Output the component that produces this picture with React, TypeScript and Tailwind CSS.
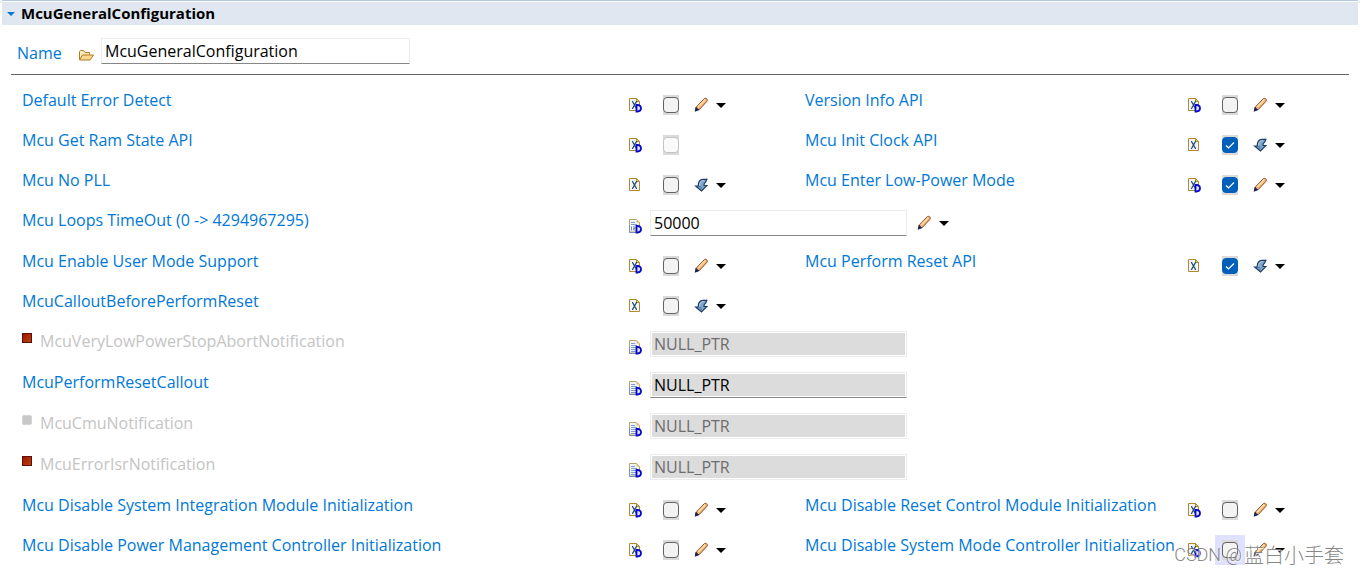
import { useState } from "react";

type Kind = "default" | "edited";

interface CheckItem {
  label: string;
  icon: "xd" | "x";
  checked?: boolean;
  disabled?: boolean;
  action?: Kind;
  focused?: boolean;
}

interface TextItem {
  label: string;
  value: string;
  numeric?: boolean;
  state: "editable" | "readonly" | "disabled";
  marker?: "red" | "gray";
}

type Row = { checks: CheckItem[] } | { text: TextItem };

const ROWS: Row[] = [
  {
    checks: [
      { label: "Default Error Detect", icon: "xd", action: "default" },
      { label: "Version Info API", icon: "xd", action: "default" },
    ],
  },
  {
    checks: [
      { label: "Mcu Get Ram State API", icon: "xd", disabled: true },
      { label: "Mcu Init Clock API", icon: "x", checked: true, action: "edited" },
    ],
  },
  {
    checks: [
      { label: "Mcu No PLL", icon: "x", action: "edited" },
      { label: "Mcu Enter Low-Power Mode", icon: "xd", checked: true, action: "default" },
    ],
  },
  { text: { label: "Mcu Loops TimeOut (0 -> 4294967295)", value: "50000", numeric: true, state: "editable" } },
  {
    checks: [
      { label: "Mcu Enable User Mode Support", icon: "xd", action: "default" },
      { label: "Mcu Perform Reset API", icon: "x", checked: true, action: "edited" },
    ],
  },
  { checks: [{ label: "McuCalloutBeforePerformReset", icon: "x", action: "edited" }] },
  { text: { label: "McuVeryLowPowerStopAbortNotification", value: "NULL_PTR", state: "disabled", marker: "red" } },
  { text: { label: "McuPerformResetCallout", value: "NULL_PTR", state: "readonly" } },
  { text: { label: "McuCmuNotification", value: "NULL_PTR", state: "disabled", marker: "gray" } },
  { text: { label: "McuErrorIsrNotification", value: "NULL_PTR", state: "disabled", marker: "red" } },
  {
    checks: [
      { label: "Mcu Disable System Integration Module Initialization", icon: "xd", action: "default" },
      { label: "Mcu Disable Reset Control Module Initialization", icon: "xd", action: "default" },
    ],
  },
  {
    checks: [
      { label: "Mcu Disable Power Management Controller Initialization", icon: "xd", action: "default" },
      { label: "Mcu Disable System Mode Controller Initialization", icon: "xd", action: "default", focused: true },
    ],
  },
];

const GRID = "grid grid-cols-[minmax(0,606fr)_minmax(0,177fr)_minmax(0,382fr)_minmax(0,173fr)]";

function toId(label: string) {
  return label.toLowerCase().replace(/[^a-z0-9]+/g, "-");
}

function DefaultBadge() {
  return <path d="M8.500 8v6.500h1c2.300 0 3.500-1.300 3.500-3.200s-1.200-3.300-3.500-3.300z" fill="#dfe6ff" stroke="#0808c8" strokeWidth="1.800" />;
}

function BoolIcon({ isDefault }: { isDefault: boolean }) {
  return (
    <svg className="h-4 w-3.5 shrink-0" viewBox="0 0 14 16" aria-hidden="true">
      <path d="M1.500 1.500h7l3 3v9h-10z" fill="#f1f6fc" stroke="#b3892f" />
      <path d="M8.500 1.500v3h3z" fill="#e8c878" stroke="#b3892f" />
      <path d="M4.500 4.500l4 7M8.500 4.500l-4 7" stroke="#27496d" strokeWidth="1.300" />
      <path d="M4 4.500h1M8 4.500h1M4 11.500h1M8 11.500h1" stroke="#27496d" />
      {isDefault && <DefaultBadge />}
    </svg>
  );
}

function TextIcon({ numeric }: { numeric?: boolean }) {
  return (
    <svg className="h-4 w-3.5 shrink-0" viewBox="0 0 14 16" aria-hidden="true">
      <path d="M1.500 1.500h7l3 3v9.500h-10z" fill="#eef4fc" stroke="#b5a468" />
      <path d="M8.500 1v3.500h3.500z" fill="#e8b868" />
      <path d="M1.500 7v7.500h8" fill="none" stroke="#7d8db0" />
      <path d="M3 4.500h4M3 6.500h6" stroke="#7f9cc8" />
      {numeric ? (
        <path d="M3.500 8.500v4M5 9h2v1.500h-1.500v1.500h2" fill="none" stroke="#7c8ba4" />
      ) : (
        <path d="M3 8.500h5M3 10.500h5M3 12.500h5" stroke="#7f9cc8" />
      )}
      <DefaultBadge />
    </svg>
  );
}

function PencilIcon() {
  return (
    <svg className="h-4 w-3.5" viewBox="0 0 14 16" aria-hidden="true">
      <path d="M2 13l.8-3.500 7.200-7.500c1-1 2-.8 2.800-.1.700.8.700 1.700-.1 2.700L5.500 12.300z" fill="#f3b673" stroke="#8a4a20" />
      <path d="M4.200 10l7-7.500" stroke="#ffdcae" strokeWidth="1.600" />
      <path d="M1.500 13.800l.5-3 2.300 2z" fill="#1c2558" stroke="#1c2558" strokeWidth="1.200" />
    </svg>
  );
}

function EditedIcon() {
  return (
    <svg className="h-4 w-3.5" viewBox="0 0 14 16" aria-hidden="true">
      <path
        d="M13.300 2c-1.300 1-.7 2.300-1.800 3.200-1 .8-1.700 1.300-1.500 3.300h3L7.500 14 1.700 9h2.600C4 5 6 2.300 8.800 2.300c1.700 0 3.200.2 4.500-.3z"
        fill="#7fa6cd"
        stroke="#1f3d63"
        strokeWidth="1.200"
      />
      <path d="M5.700 8.500C5.500 5.500 6.700 3.700 9.700 3.500" fill="none" stroke="#b9d2ea" />
      <path d="M4 9.600h3v2.700" fill="none" stroke="#4f7dab" />
    </svg>
  );
}

function FolderIcon() {
  return (
    <svg className="h-3.5 w-4 shrink-0" viewBox="0 0 16 14" aria-hidden="true">
      <path d="M1.500 11.500v-8l1-1h3l1.500 2h4.500v2" fill="#fbeab8" stroke="#b07a28" />
      <path d="M1.500 12l3-5h11l-3.500 5z" fill="#f9d98c" stroke="#b07a28" />
    </svg>
  );
}

function ActionMenu({ kind, label }: { kind: Kind; label: string }) {
  return (
    <button type="button" aria-label={`${label} options`} className="flex shrink-0 items-center gap-2">
      {kind === "default" ? <PencilIcon /> : <EditedIcon />}
      <svg className="h-[5px] w-2.5" viewBox="0 0 10 5" aria-hidden="true">
        <path d="M0 0h10L5 5z" fill="#000" />
      </svg>
    </button>
  );
}

function CheckLabel({ item }: { item: CheckItem }) {
  return (
    <label htmlFor={toId(item.label)} className="self-start pt-1.5 leading-5 whitespace-nowrap text-[#0078d7]">
      {item.label}
    </label>
  );
}

function CheckControls({ item }: { item: CheckItem }) {
  const [checked, setChecked] = useState(!!item.checked);

  return (
    <div className="flex h-10 items-center pt-0.5">
      <BoolIcon isDefault={item.icon === "xd"} />
      <span
        className={`ml-3.5 flex h-[30px] w-[30px] shrink-0 items-center justify-center ${item.focused ? "bg-[#e0e0ff]" : ""}`}
      >
        <span className="relative flex h-5 w-4 items-center bg-[#dadada]">
          <input
            id={toId(item.label)}
            type="checkbox"
            checked={checked}
            disabled={item.disabled}
            onChange={(e) => setChecked(e.target.checked)}
            className="h-4 w-4 appearance-none rounded border border-[#626262] bg-[#f3f3f3] checked:border-[#005fb8] checked:bg-[#005fb8] disabled:border-[#c3c3c3] disabled:bg-[#fafafa]"
          />
          {checked && (
            <svg className="pointer-events-none absolute inset-x-0 top-0.5 h-4 w-4" viewBox="0 0 16 16" aria-hidden="true">
              <path d="M4 8.500l2.500 2.500L12 5.500" fill="none" stroke="#fff" strokeWidth="1.200" />
            </svg>
          )}
        </span>
      </span>
      {item.action && (
        <div className="ml-2">
          <ActionMenu kind={item.action} label={item.label} />
        </div>
      )}
    </div>
  );
}

function CheckRow({ items }: { items: CheckItem[] }) {
  return (
    <div className={GRID}>
      {items.map((item) => (
        <div key={item.label} className="contents">
          <CheckLabel item={item} />
          <CheckControls item={item} />
        </div>
      ))}
    </div>
  );
}

const FIELD_STYLES = {
  editable: "border-[#ececec] border-b-[#868686] bg-white text-black",
  readonly: "border-[#ececec] border-b-[#868686] bg-[#dcdcdc] text-black shadow-[inset_0_0_0_1px_#fff]",
  disabled: "border-[#ececec] bg-[#dcdcdc] text-[#6d6d6d] shadow-[inset_0_0_0_1px_#fff]",
};

function TextRow({ item }: { item: TextItem }) {
  const disabled = item.state === "disabled";

  return (
    <div className={`${GRID} h-[41px]`}>
      <div className="flex items-start gap-2 pt-1.5">
        {item.marker && (
          <span
            className={`mt-0.5 h-2.5 w-2.5 border ${
              item.marker === "red"
                ? "border-[#5c1008] bg-linear-to-br from-[#a01000] to-[#b84010]"
                : "rounded-xs border-[#d4d4d4] bg-[#c8c8c8]"
            }`}
          />
        )}
        <label
          htmlFor={toId(item.label)}
          className={`leading-5 whitespace-nowrap ${disabled ? "text-[#c4c4c4]" : "text-[#0078d7]"}`}
        >
          {item.label}
        </label>
      </div>
      <div className="col-span-3 flex items-start pt-1.5">
        <div className="pt-2">
          <TextIcon numeric={item.numeric} />
        </div>
        <input
          id={toId(item.label)}
          type="text"
          defaultValue={item.value}
          disabled={disabled}
          readOnly={item.state === "readonly"}
          className={`ml-2 h-[26px] w-[257px] border px-[3px] ${FIELD_STYLES[item.state]}`}
        />
        {item.state === "editable" && (
          <div className="ml-2.5 flex h-[26px] items-center">
            <ActionMenu kind="default" label={item.label} />
          </div>
        )}
      </div>
    </div>
  );
}

export default function App() {
  const [open, setOpen] = useState(true);

  return (
    <main className="relative min-h-screen overflow-hidden bg-white font-['Open_Sans','Noto_Sans_CJK_SC',sans-serif] text-base text-black">
      <header className="rounded-t border-t border-[#b4c7de] px-0.5 pt-px">
        <h1 className="bg-[#e0e7f1]">
          <button
            type="button"
            aria-expanded={open}
            onClick={() => setOpen(!open)}
            className="flex h-[23px] w-full items-center gap-1.5 pl-[5px] text-[15px] font-bold"
          >
            <svg className="h-1 w-2 shrink-0" viewBox="0 0 8 4" aria-hidden="true">
              <path d="M0 0h8L4 4z" fill="#0078d7" />
            </svg>
            McuGeneralConfiguration
          </button>
        </h1>
      </header>

      {open && (
        <form onSubmit={(e) => e.preventDefault()}>
          <div className="mx-[11px] flex h-[50px] items-center border-b border-[#666] pt-0.5 pl-1.5">
            <label htmlFor="name" className="w-[61px] pt-1 text-[#0078d7]">
              Name
            </label>
            <div className="pt-2">
              <FolderIcon />
            </div>
            <input
              id="name"
              type="text"
              defaultValue="McuGeneralConfiguration"
              className="ml-[7px] h-[26px] w-[309px] border border-[#ececec] border-b-[#868686] px-[3px]"
            />
          </div>

          <div className="pt-[9px] pl-[22px]">
            {ROWS.map((row) =>
              "text" in row ? (
                <TextRow key={row.text.label} item={row.text} />
              ) : (
                <CheckRow key={row.checks[0].label} items={row.checks} />
              )
            )}
          </div>
        </form>
      )}

      <p className="pointer-events-none absolute right-4 bottom-1.5 flex items-center gap-0.5 text-xl leading-7 text-[#777]/90 [text-shadow:1px_1px_1px_#fff]">
        <span className="font-[Roboto,sans-serif] text-lg font-light">CSDN @</span>
        <span className="font-['Noto_Sans_CJK_SC',sans-serif] font-light">蓝白小手套</span>
      </p>
    </main>
  );
}
